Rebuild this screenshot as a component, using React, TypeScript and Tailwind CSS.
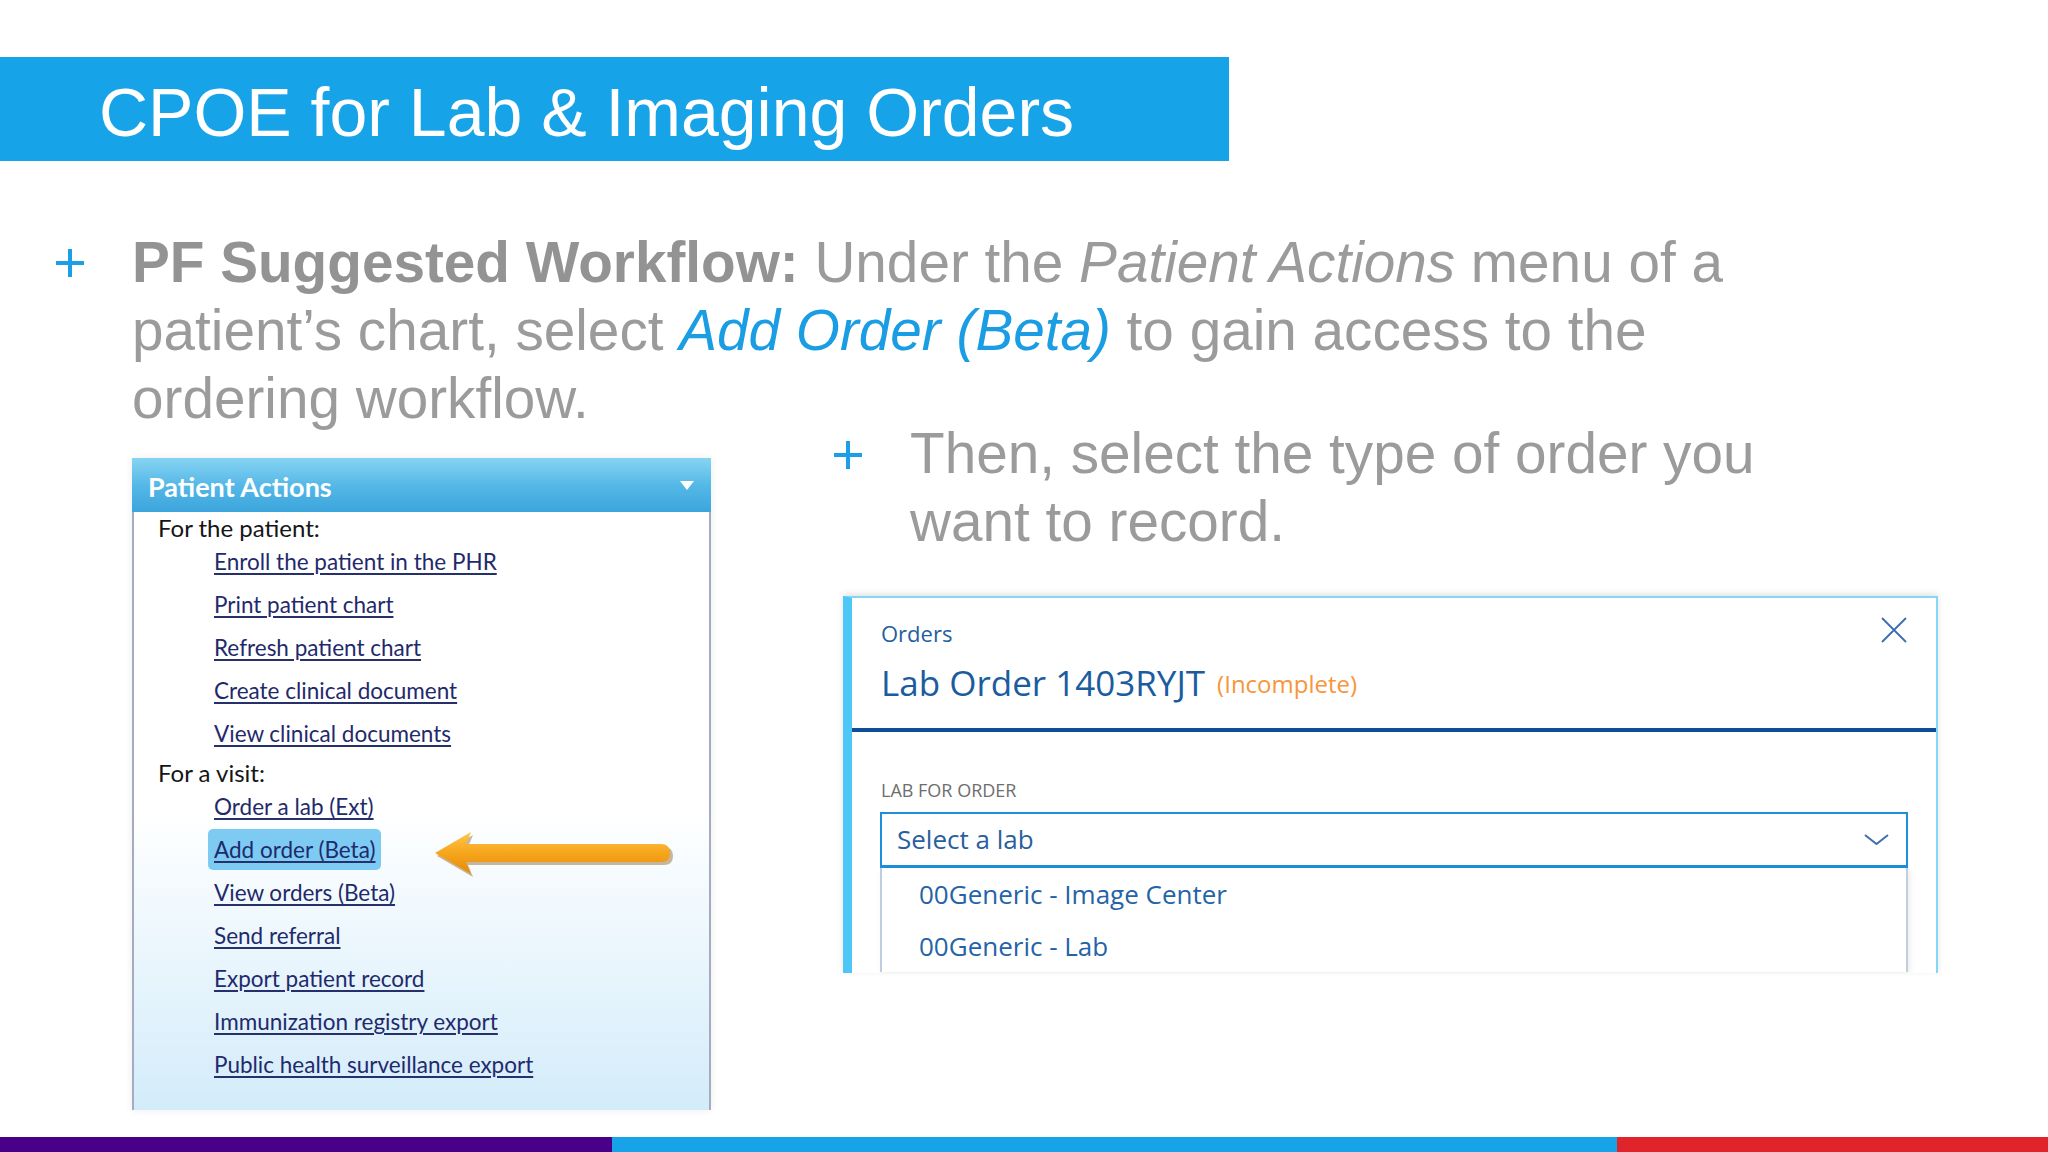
import React from "react";

const sans = { fontFamily: '"Liberation Sans", Arial, sans-serif' };
const openSans = { fontFamily: '"Open Sans", "Noto Sans", sans-serif' };
const lato = { fontFamily: 'Lato, "Open Sans", sans-serif' };

function Plus() {
  return (
    <svg width="28" height="28" viewBox="0 0 28 28" className="block">
      <rect x="0" y="12" width="28" height="4" fill="#1b9fe6" />
      <rect x="12" y="0" width="4" height="28" fill="#1b9fe6" />
    </svg>
  );
}

function Arrow() {
  return (
    <svg width="240" height="48" viewBox="0 0 240 48" className="absolute left-[301px] top-[3px]">
      <defs>
        <linearGradient id="arrowFill" x1="0" y1="0" x2="0" y2="1">
          <stop offset="0" stopColor="#ffc64a" />
          <stop offset="0.5" stopColor="#f7a51d" />
          <stop offset="1" stopColor="#e48b08" />
        </linearGradient>
      </defs>
      <path
        d="M2,25 L38,4 L33,16 L229,16 Q238,16 238,25 Q238,34 229,34 L33,34 L38,46 Z"
        fill="#7a4d0a"
        opacity="0.4"
      />
      <path
        d="M0,22 L36,1 L31,13 L226,13 Q235,13 235,22 Q235,31 226,31 L31,31 L36,43 Z"
        fill="url(#arrowFill)"
      />
    </svg>
  );
}

const patientLinks = [
  "Enroll the patient in the PHR",
  "Print patient chart",
  "Refresh patient chart",
  "Create clinical document",
  "View clinical documents",
];

const visitLinks = [
  "Order a lab (Ext)",
  "Add order (Beta)",
  "View orders (Beta)",
  "Send referral",
  "Export patient record",
  "Immunization registry export",
  "Public health surveillance export",
];

function LinkRow({ label }: { label: string }) {
  const active = label === "Add order (Beta)";
  return (
    <div className="relative flex h-[43px] items-center pl-[80px]">
      <span
        className={
          "inline-block h-[41px] text-[22.5px] leading-[41px] text-[#1f2a6c] underline decoration-[#26306a] decoration-[1.5px] underline-offset-[3px] " +
          (active ? "ml-[-6px] rounded-[5px] bg-[#7dcbf3] px-[6px]" : "")
        }
      >
        {label}
      </span>
      {active && <Arrow />}
    </div>
  );
}

function PatientActions() {
  return (
    <div className="flex h-[652px] w-[579px] shrink-0 flex-col shadow-[0_0_8px_rgba(0,0,0,0.08)]" style={lato}>
      <div className="flex h-[54px] shrink-0 items-start justify-between bg-linear-to-b from-[#86d4f2] via-[#55b8e7] to-[#3ba5dc] pl-[16px] pr-[17px] pt-[14px]">
        <span className="text-[27px] font-bold leading-[30px] text-white">Patient Actions</span>
        <svg width="14" height="9" viewBox="0 0 14 9" className="mt-[9px]">
          <polygon points="0,0 14,0 7,9" fill="#ffffff" />
        </svg>
      </div>
      <div className="flex flex-1 flex-col border-x-2 border-[#a3adbf] bg-linear-to-b from-white from-50% to-[#d3ecfa] pt-[3px]">
        <div className="h-[25px] pl-[24px] text-[24px] leading-[25px] text-[#151515]">For the patient:</div>
        {patientLinks.map((l) => (
          <LinkRow key={l} label={l} />
        ))}
        <div className="mt-[5px] h-[25px] pl-[24px] text-[24px] leading-[25px] text-[#151515]">For a visit:</div>
        {visitLinks.map((l) => (
          <LinkRow key={l} label={l} />
        ))}
      </div>
    </div>
  );
}

function OrdersDialog() {
  return (
    <div
      className="ml-[9px] mt-[40px] flex h-[377px] w-[1095px] flex-col overflow-hidden border-t-2 border-r-2 border-l-[9px] border-t-[#86d6f5] border-r-[#86d6f5] border-l-[#4dc7f7] bg-white shadow-[0_-2px_6px_rgba(0,0,0,0.12)]"
      style={openSans}
    >
      <div className="flex shrink-0 items-start justify-between px-[29px] pt-[20px] pb-[21px]">
        <div>
          <div className="text-[22px] leading-[30px] text-[#23609f]">Orders</div>
          <div className="mt-[11px] text-[35px] leading-[48px] text-[#1b5c9f]">
            Lab Order 1403RYJT
            <span className="ml-[12px] align-[3px] text-[24px] leading-none text-[#f7963a]">(Incomplete)</span>
          </div>
        </div>
        <svg width="26" height="26" viewBox="0 0 26 26" className="mt-[-1px]">
          <path d="M1,1 L25,25 M25,1 L1,25" stroke="#3a6db0" strokeWidth="1.8" fill="none" />
        </svg>
      </div>
      <div className="h-[4px] shrink-0 bg-[#0c4e98]" />
      <div className="min-h-0 flex-1 px-[28px] pt-[46px]">
        <div className="pl-[1px] text-[18px] leading-[24px] text-[#6e6e6e]">LAB FOR ORDER</div>
        <div className="mt-[10px] flex h-[56px] items-center justify-between border-2 border-b-[3px] border-[#1d8fdc] pl-[15px] pr-[17px]">
          <span className="text-[26px] leading-[35px] text-[#2a5f9e]">Select a lab</span>
          <svg width="25" height="11" viewBox="0 0 25 11">
            <polyline points="1,1 12.5,10 24,1" stroke="#3d6fae" strokeWidth="2" fill="none" />
          </svg>
        </div>
        <div className="border-x-2 border-[#bfcfdf] shadow-[2px_2px_6px_rgba(0,0,0,0.08)]">
          <div className="h-[52px] pl-[37px] text-[26px] leading-[52px] text-[#2563a8]">00Generic - Image Center</div>
          <div className="h-[52px] pl-[37px] text-[26px] leading-[52px] text-[#2563a8]">00Generic - Lab</div>
        </div>
      </div>
    </div>
  );
}

export default function App() {
  return (
    <div className="flex h-[1152px] w-[2048px] flex-col overflow-hidden bg-white" style={sans}>
      <div className="mt-[57px] flex h-[104px] w-[1229px] shrink-0 items-center bg-[#17a3e8] pl-[99px] pt-[5px]">
        <h1 className="text-[68px] leading-[76px] text-white">CPOE for Lab &amp; Imaging Orders</h1>
      </div>

      <div className="mt-[68px] flex">
        <div className="w-[132px] shrink-0 pl-[56px] pt-[20px]">
          <Plus />
        </div>
        <p className="text-[56.7px] leading-[68px] text-[#9b9b9b]">
          <b className="text-[#939393]">PF Suggested Workflow:</b> Under the <i>Patient Actions</i> menu of a
          <br />
          patient’s chart, select <i className="text-[#1a9de2]">Add Order (Beta)</i> to gain access to the
          <br />
          ordering workflow.
        </p>
      </div>

      <div className="mt-[25px] flex">
        <div className="ml-[132px]">
          <PatientActions />
        </div>
        <div className="ml-[123px] mt-[-38px] flex flex-col">
          <div className="flex">
            <div className="shrink-0 pt-[21px]">
              <Plus />
            </div>
            <p className="ml-[48px] text-[56.7px] leading-[68px] text-[#9b9b9b]">
              Then, select the type of order you
              <br />
              want to record.
            </p>
          </div>
          <OrdersDialog />
        </div>
      </div>

      <div className="mt-auto flex h-[15px] shrink-0">
        <div className="w-[612px] bg-[#480088]" />
        <div className="w-[1005px] bg-[#17a3e8]" />
        <div className="flex-1 bg-[#e1232a]" />
      </div>
    </div>
  );
}
